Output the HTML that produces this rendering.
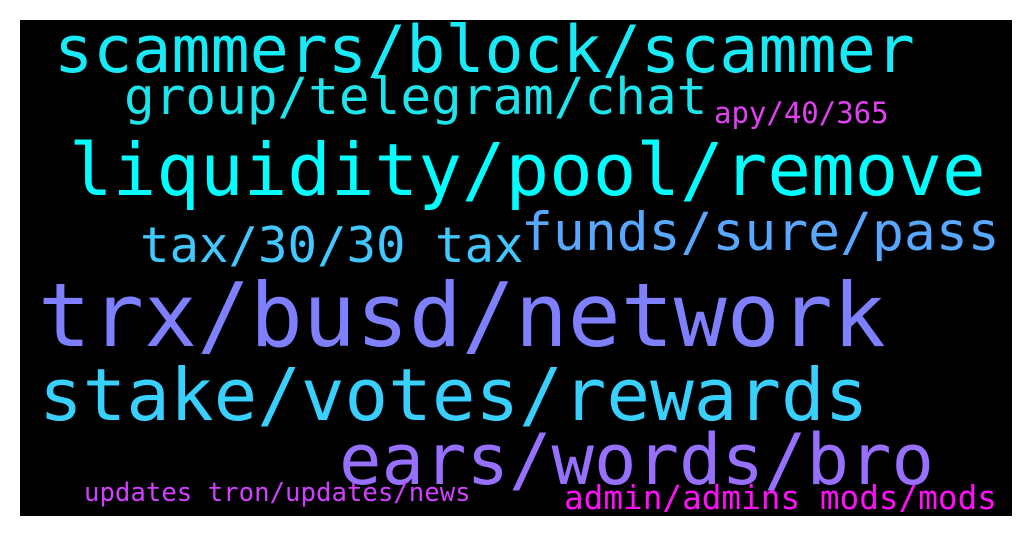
<!DOCTYPE html>
<html><head><style>
body{margin:0;background:#fff;width:1031px;height:536px;overflow:hidden;position:relative}
#bg{position:absolute;left:20px;top:20px;width:992px;height:496px;background:#000}
.w{position:absolute;font-family:"DejaVu Sans Mono","Liberation Mono",monospace;line-height:0;height:0;white-space:nowrap}
</style></head><body>
<div id="bg"></div>
<div class="w" style="left:54px;top:calc(73px - 22.5px);font-size:65px;color:#18eaf8">scammers/block/scammer</div>
<div class="w" style="left:124px;top:calc(116px - 17.6px);font-size:51px;color:#1ee4ec">group/telegram/chat</div>
<div class="w" style="left:714px;top:calc(123px - 10px);font-size:29px;color:#e040f0">apy/40/365</div>
<div class="w" style="left:69px;top:calc(196px - 25px);font-size:72.5px;color:#00ffff">liquidity/pool/remove</div>
<div class="w" style="left:140px;top:calc(263px - 17px);font-size:49px;color:#40c8ff">tax/30/30 tax</div>
<div class="w" style="left:521px;top:calc(251px - 18.3px);font-size:53px;color:#58a8ff">funds/sure/pass</div>
<div class="w" style="left:38px;top:calc(346px - 30.4px);font-size:88px;color:#7f80ff">trx/busd/network</div>
<div class="w" style="left:39px;top:calc(421px - 25px);font-size:72.5px;color:#38d0ff">stake/votes/rewards</div>
<div class="w" style="left:339px;top:calc(484px - 24.4px);font-size:70.6px;color:#9870ff">ears/words/bro</div>
<div class="w" style="left:84px;top:calc(502px - 8.9px);font-size:25.7px;color:#d040ff">updates tron/updates/news</div>
<div class="w" style="left:564px;top:calc(509px - 11.3px);font-size:32.7px;color:#ff10f8">admin/admins mods/mods</div>
</body></html>
